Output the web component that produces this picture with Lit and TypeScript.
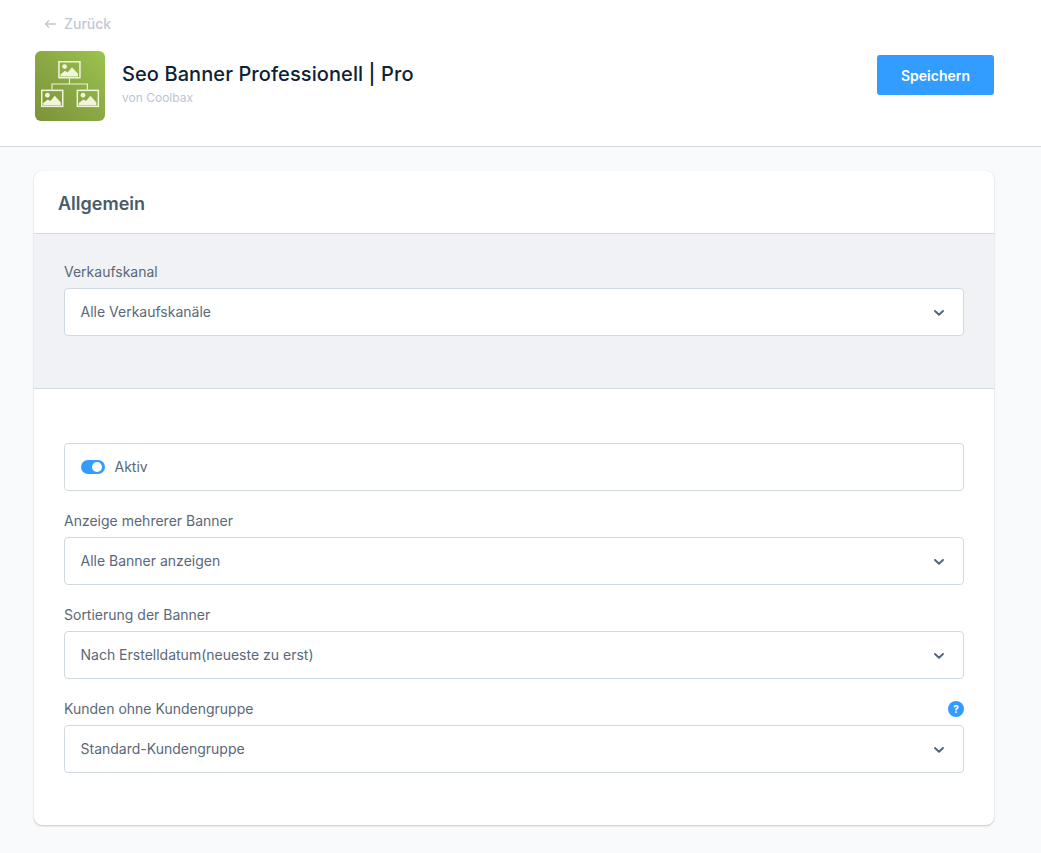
import { LitElement, html, svg, css } from "lit";
import { customElement } from "lit/decorators.js";

const chevron = html`<svg class="chev" width="10" height="6" viewBox="0 0 10 6"><path d="M1 1l4 3.8L9 1" fill="none" stroke="#52667a" stroke-width="1.9" stroke-linecap="round" stroke-linejoin="round"/></svg>`;

const picture = (x: number, y: number) => svg`<g transform="translate(${x} ${y})">
  <rect x="0.75" y="0.75" width="21" height="16" fill="none" stroke="#f0f5dc" stroke-width="1.5"/>
  <circle cx="6.4" cy="5.6" r="2.4" fill="#f0f5dc"/>
  <path d="M2.2 15.6v-2.2l4.6-3.6 2.6 1.6 4.4-5.2 6 6.6v2.8z" fill="#f0f5dc"/>
</g>`;

@customElement("app-root")
export class AppRoot extends LitElement {
  static styles = css`
    :host { display: block; min-height: 853px; background: #f9fafc; font-family: Inter, "Liberation Sans", sans-serif; color: #5a6879; }
    .top { background: #fff; border-bottom: 1px solid #d1d9e0; height: 146px; box-sizing: content-box; padding: 0 47px 0 35px; }
    .back { display: flex; align-items: center; gap: 7px; height: 16px; padding: 16px 0 0 9px; font-size: 14px; font-weight: 500; color: #bfc9d6; line-height: 16px; }
    .row { display: flex; align-items: flex-start; margin-top: 19px; }
    .logo { width: 70px; height: 70px; border-radius: 6px; background: linear-gradient(45deg, #7b9339 0%, #8aa844 50%, #9cc44e 100%); flex: none; display: block; }
    .meta { margin-left: 17px; flex: 1; padding-top: 9px; }
    .title { font-size: 20px; font-weight: 500; line-height: 28px; color: #0d2235; letter-spacing: 0.09px; }
    .by { font-size: 12px; line-height: 16px; color: #bcc5d1; margin-top: 2px; }
    .save { width: 117px; height: 40px; border: 0; border-radius: 3px; background: #339cff; color: #fff; font: 600 14px Inter, "Liberation Sans", sans-serif; margin-top: 4px; padding: 0; }
    .card { margin: 24px 47px 0 34px; background: #fff; border-radius: 8px; box-shadow: 0 1px 2px rgba(0,0,0,.2), 0 0 1px rgba(0,0,0,.1); overflow: hidden; }
    .head { display: flex; align-items: center; padding: 2px 0 0 24px; box-sizing: border-box; font-size: 18px; font-weight: 600; color: #4a5a68; box-shadow: inset 0 -1px #d1d9e0; height: 63px; }
    .grey { background: #f0f2f5; border-bottom: 1px solid #d1d9e0; padding: 30px 30px 52px; }
    .white { padding: 54px 30px 52px; display: flex; flex-direction: column; gap: 22px; }
    .label { display: flex; justify-content: space-between; align-items: flex-start; height: 24px; font-size: 14px; line-height: 16px; color: #5a6879; }
    .box { height: 48px; box-sizing: border-box; background: #fff; border: 1px solid #d1d9e0; border-radius: 4px; display: flex; align-items: center; padding: 0 19px 2px 15.5px; font-size: 14px; color: #5a6879; justify-content: space-between; }
    .chev { margin-top: 3px; }
    .toggle { justify-content: flex-start; gap: 10px; padding-bottom: 1px; }
    .switch { width: 24px; height: 14px; border-radius: 7px; background: #339cff; position: relative; }
    .switch::after { content: ""; position: absolute; right: 3px; top: 2px; width: 10px; height: 10px; border-radius: 50%; background: #fff; }
    .help { width: 16px; height: 16px; border-radius: 50%; background: #339cff; color: #fff; font-size: 10px; font-weight: 700; line-height: 16px; text-align: center; }
  `;

  private field(label: string, value: string, help = false) {
    return html`<div>
      <div class="label"><span>${label}</span>${help ? html`<span class="help">?</span>` : ""}</div>
      <div class="box"><span>${value}</span>${chevron}</div>
    </div>`;
  }

  render() {
    return html`
      <div class="top">
        <div class="back">
          <svg width="13" height="10" viewBox="0 0 13 10"><path d="M12 5H1.5M5 1.5L1.5 5 5 8.5" fill="none" stroke="#bfc9d6" stroke-width="1.4"/></svg>
          <span>Zurück</span>
        </div>
        <div class="row">
          <svg class="logo" viewBox="0 0 70 70">
            ${picture(23.2, 10)}
            <path d="M34.5 27.4V33M17 38.6V33h35.4v5.6" fill="none" stroke="#f0f5dc" stroke-width="1.1"/>
            ${picture(6, 38.6)}
            ${picture(41.6, 38.6)}
          </svg>
          <div class="meta">
            <div class="title">Seo Banner Professionell | Pro</div>
            <div class="by">von Coolbax</div>
          </div>
          <button class="save">Speichern</button>
        </div>
      </div>
      <div class="card">
        <div class="head">Allgemein</div>
        <div class="grey">${this.field("Verkaufskanal", "Alle Verkaufskanäle")}</div>
        <div class="white">
          <div class="box toggle"><span class="switch"></span><span>Aktiv</span></div>
          ${this.field("Anzeige mehrerer Banner", "Alle Banner anzeigen")}
          ${this.field("Sortierung der Banner", "Nach Erstelldatum(neueste zu erst)")}
          ${this.field("Kunden ohne Kundengruppe", "Standard-Kundengruppe", true)}
        </div>
      </div>
    `;
  }
}
